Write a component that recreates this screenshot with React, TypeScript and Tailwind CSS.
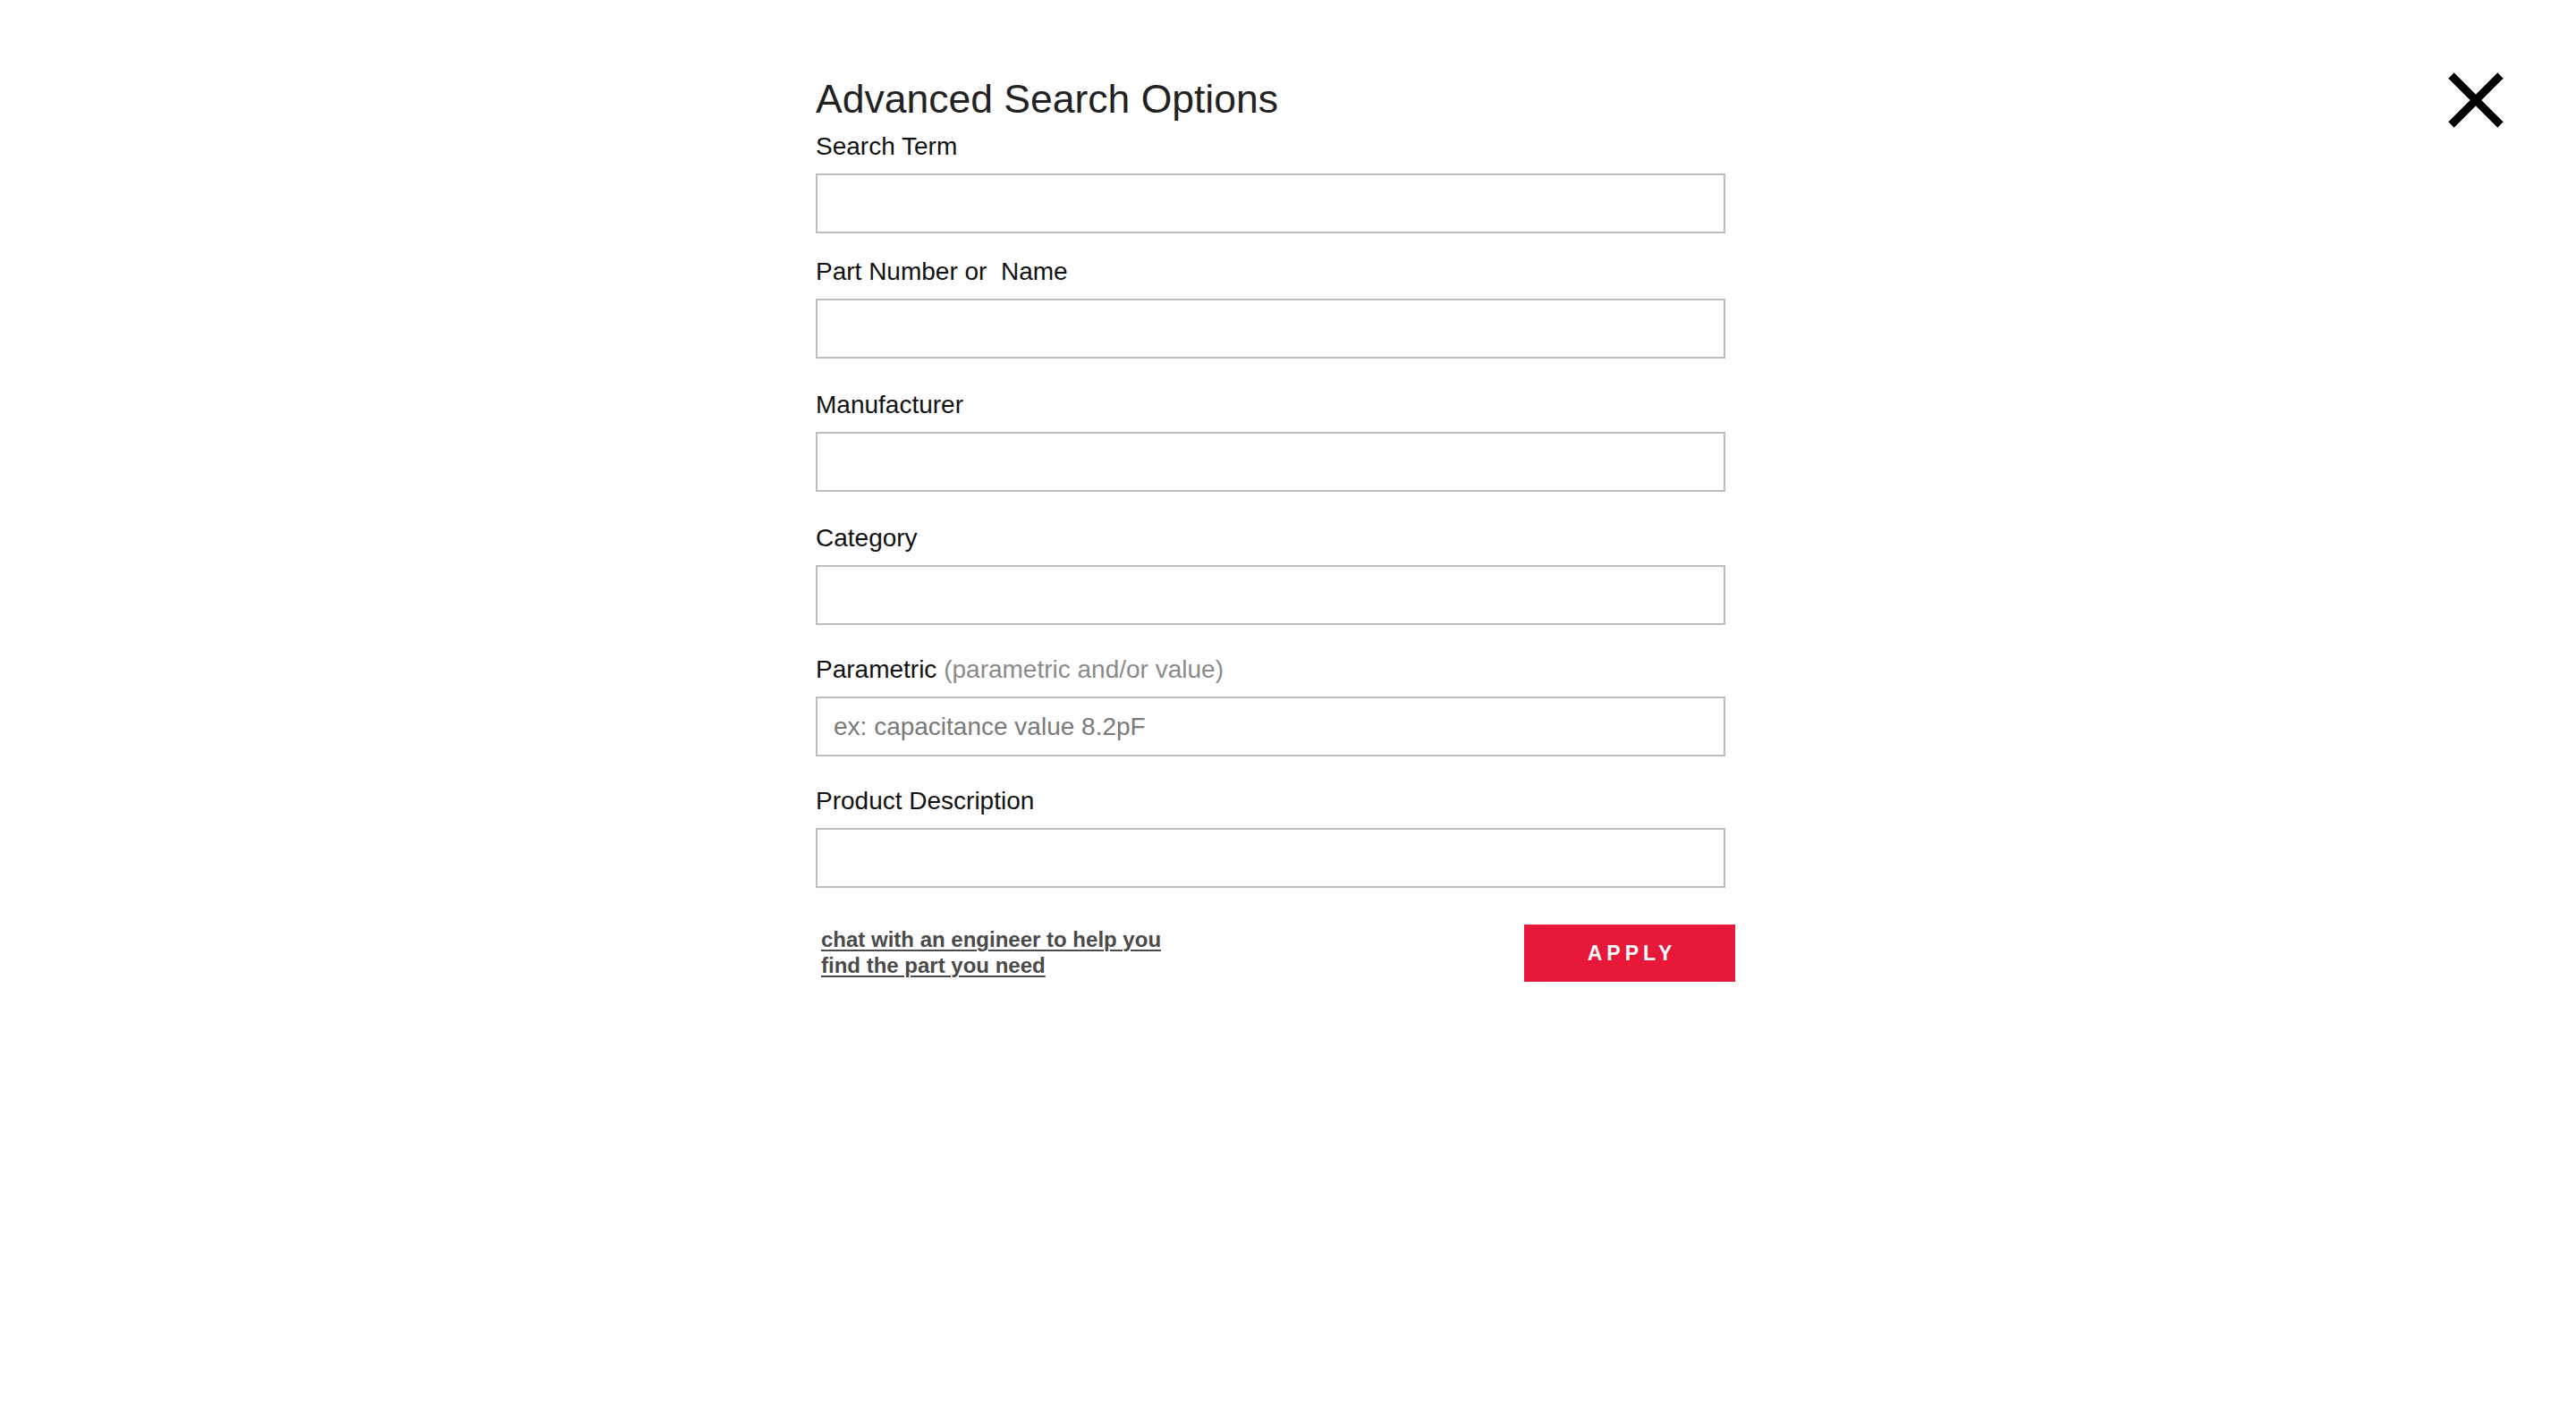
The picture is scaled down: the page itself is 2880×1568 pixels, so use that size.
import React, { useState } from 'react';

interface FieldProps {
  label: string;
  hint?: string;
  placeholder?: string;
  gapTop: string;
  value: string;
  onChange: (v: string) => void;
}

const Field: React.FC<FieldProps> = ({ label, hint, placeholder, gapTop, value, onChange }) => (
  <div className={gapTop}>
    <label className="block text-[28px] leading-[32px] text-[#111] mb-[14px]">
      {label}
      {hint && <span className="text-[#8a8a8a]"> {hint}</span>}
    </label>
    <input
      type="text"
      value={value}
      placeholder={placeholder}
      onChange={e => onChange(e.target.value)}
      className="block w-[1017px] h-[67px] border-2 border-[#bdbdbd] bg-white px-[18px] text-[28px] text-[#333] placeholder:text-[#7a7a7a] outline-none"
    />
  </div>
);

const fields = [
  { key: 'term', label: 'Search Term', gapTop: 'mt-[12px]' },
  { key: 'part', label: 'Part Number or \u00a0Name', gapTop: 'mt-[27px]' },
  { key: 'mfr', label: 'Manufacturer', gapTop: 'mt-[36px]' },
  { key: 'cat', label: 'Category', gapTop: 'mt-[36px]' },
  {
    key: 'param',
    label: 'Parametric',
    hint: '(parametric and/or value)',
    placeholder: 'ex: capacitance value 8.2pF',
    gapTop: 'mt-[34px]',
  },
  { key: 'desc', label: 'Product Description', gapTop: 'mt-[34px]' },
];

const App: React.FC = () => {
  const [values, setValues] = useState<Record<string, string>>({});

  return (
    <div className="relative min-h-screen bg-white font-['Liberation_Sans',Arial,Helvetica,sans-serif]">
      <button className="absolute top-[81px] right-[80px] w-[64px] h-[62px]" aria-label="Close">
        <svg width="64" height="62" viewBox="0 0 64 62">
          <path d="M4.5 3.5 L59.5 58.5 M59.5 3.5 L4.5 58.5" stroke="#000" strokeWidth="9" fill="none" />
        </svg>
      </button>

      <div className="mx-auto w-[1056px] pt-[86px] pb-[100px]">
        <h2 className="text-[44.5px] leading-[50px] text-[#222]">Advanced Search Options</h2>

        {fields.map(f => (
          <Field
            key={f.key}
            label={f.label}
            hint={f.hint}
            placeholder={f.placeholder}
            gapTop={f.gapTop}
            value={values[f.key] || ''}
            onChange={v => setValues({ ...values, [f.key]: v })}
          />
        ))}

        <div className="mt-[41px] w-[1028px] flex justify-between items-start">
          <a
            href="#"
            className="mt-[2px] pl-[6px] w-[420px] text-[24px] leading-[29px] font-bold text-[#4a4a4a] underline decoration-2 underline-offset-[3px]"
          >
            chat with an engineer to help you find the part you need
          </a>
          <button className="w-[236px] h-[64px] bg-[#e8183a] text-white text-[23px] font-bold tracking-[5px] pl-[5px]">
            APPLY
          </button>
        </div>
      </div>
    </div>
  );
};

export default App;
